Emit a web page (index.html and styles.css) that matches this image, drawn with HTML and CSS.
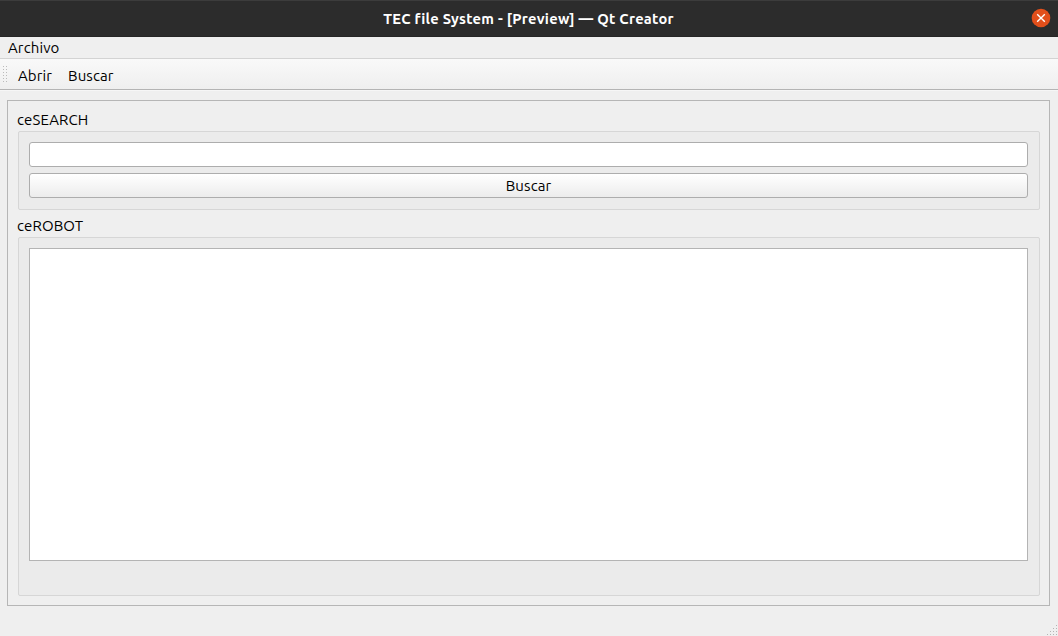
FILE: index.html
```html
<!DOCTYPE html>
<html lang="es">
<head>
<meta charset="utf-8">
<title>TEC file System</title>
<link rel="stylesheet" href="styles.css">
</head>
<body>
<div class="window">
  <header class="titlebar">
    <span class="title">TEC file System - [Preview] — Qt Creator</span>
    <svg class="close" width="20" height="20" viewBox="0 0 20 20"><circle cx="10" cy="10" r="9.3" fill="#e24f1b"/><path d="M6.2 6.2l7.6 7.6M13.8 6.2l-7.6 7.6" stroke="#fff" stroke-width="1.4"/></svg>
  </header>
  <nav class="menubar"><span class="archivo">Archivo</span></nav>
  <div class="toolbar">
    <svg class="grip" width="4" height="16" viewBox="0 0 4 16" fill="#bbb"><path d="M0 0h1v1H0zM3 0h1v1H3zM0 3h1v1H0zM3 3h1v1H3zM0 6h1v1H0zM3 6h1v1H3zM0 9h1v1H0zM3 9h1v1H3zM0 12h1v1H0zM3 12h1v1H3zM0 15h1v1H0zM3 15h1v1H3z"/></svg>
    <span class="abrir">Abrir</span>
    <span class="buscar">Buscar</span>
  </div>
  <main class="frame">
    <div class="label search-label"><span>ceSEARCH</span></div>
    <section class="group search">
      <input class="field" type="text">
      <button class="button"><span class="buscar">Buscar</span></button>
    </section>
    <div class="label robot-label"><span>ceROBOT</span></div>
    <section class="group robot"><div class="view"></div></section>
  </main>
  <footer class="statusbar">
    <svg width="10" height="10" viewBox="0 0 10 10" fill="#b4b4b4"><path d="M9 0h1v1H9zM6 3h1v1H6zM9 3h1v1H9zM3 6h1v1H3zM6 6h1v1H6zM9 6h1v1H9zM0 9h1v1H0zM3 9h1v1H3zM6 9h1v1H6zM9 9h1v1H9z"/></svg>
  </footer>
</div>
</body>
</html>
```
FILE: styles.css
```css
* { box-sizing: border-box; }
body { margin: 0; background: #2b2b2b; font: 15px/20px Ubuntu, "Noto Sans", sans-serif; letter-spacing: .12px; color: #000; }
.window { display: flex; flex-direction: column; width: 1058px; height: 636px; background: #efefef; overflow: hidden; }
.titlebar { display: grid; grid-template-columns: 1fr auto 1fr; align-items: center; height: 37px; padding: 0 7px 1px 6px; background: #2c2c2c; border-top: 1px solid #3c3c3c; border-bottom: 1px solid #262626; color: #fff; font-size: 14.67px; font-weight: 700; }
.title { grid-column: 2; padding-top: 2px; letter-spacing: .27px; white-space: nowrap; }
.close { justify-self: end; }
.menubar { height: 22px; padding: 1px 8px 0; border-bottom: 1px solid #d3d3d3; }
.menubar span { display: block; }
.toolbar { display: flex; height: 31px; padding: 7px 3px 0; background: linear-gradient(#f9f9f9, #efefef); border-bottom: 1px solid #b4b4b4; box-shadow: 0 1px #f6f6f6; }
.grip { flex: none; margin-right: 11px; }
.abrir { width: 50px; }
.frame { height: 506px; margin: 10px 8px 0 7px; padding: 9px 9px 9px 10px; border: 1px solid #b6b6b6; display: flex; flex-direction: column; }
.label { flex: none; height: 21px; margin-left: -1px; }
.robot-label { height: 27px; padding-top: 6px; }
.group { background: #ebebeb; border: 1px solid #d6d6d6; border-radius: 2px; padding: 10px 11px 0 10px; }
.search { height: 79px; display: flex; flex-direction: column; gap: 6px; }
.robot { height: 359px; }
.field, .button { display: block; width: 100%; height: 25px; border: 1px solid #adadad; border-radius: 3px; padding: 0; font: inherit; letter-spacing: inherit; color: #000; }
.field { background: #fff; padding: 0 4px; }
.button { background: linear-gradient(#fff, #ececec); line-height: 22px; }
.view { height: 313px; background: #fff; border: 1px solid #b4b4b4; }
.statusbar { flex: 1; display: flex; align-items: flex-end; justify-content: flex-end; padding: 0 1px 1px 0; }
```
